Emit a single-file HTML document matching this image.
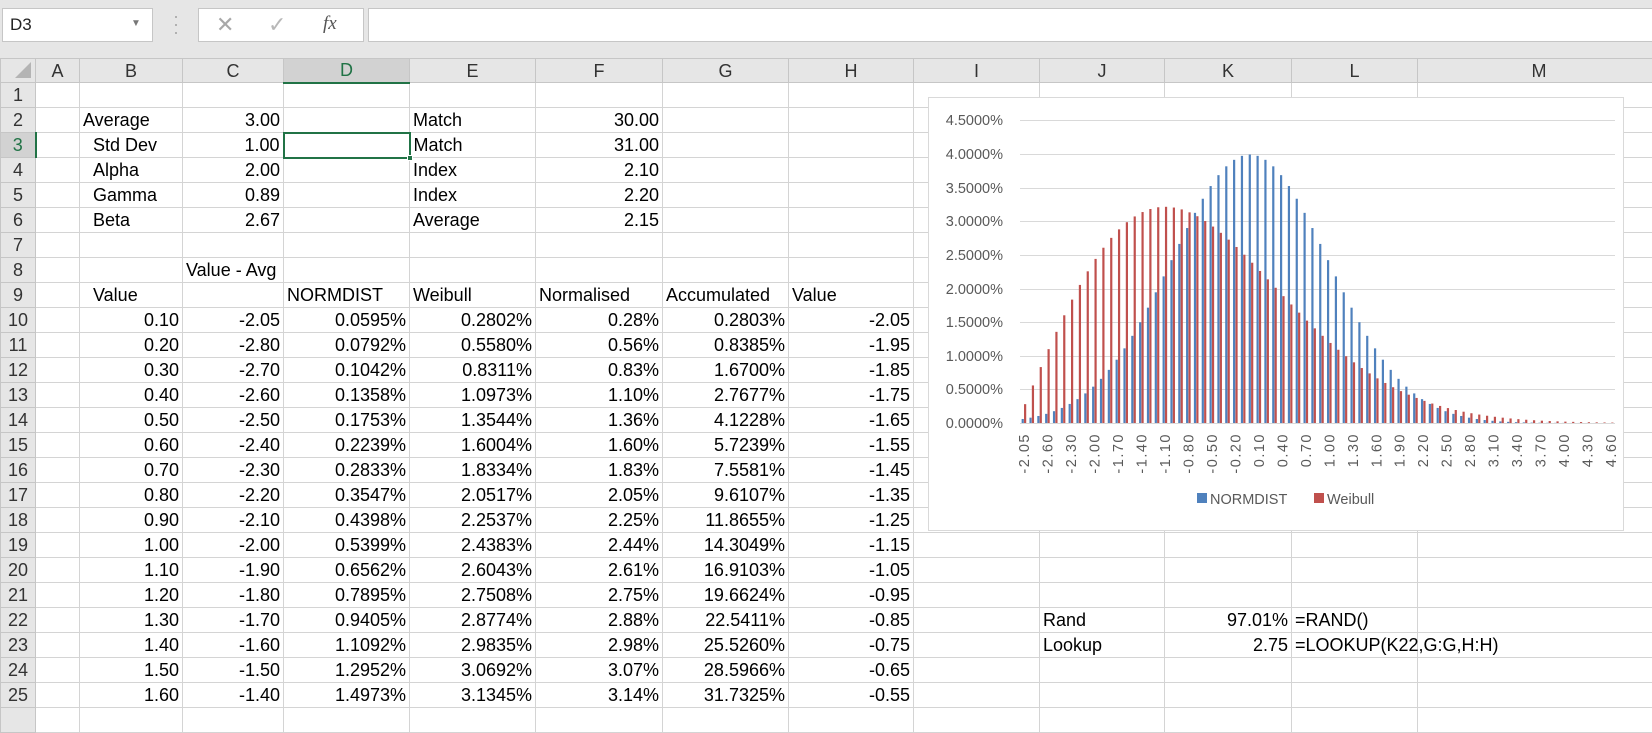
<!DOCTYPE html>
<html><head><meta charset="utf-8">
<style>
*{margin:0;padding:0;box-sizing:border-box}
body{width:1652px;height:712px;overflow:hidden;background:#fff;font-family:"Liberation Sans",Arial,sans-serif;position:relative}
#top{position:absolute;left:0;top:0;width:1652px;height:58px;background:#e6e6e6}
.box{position:absolute;background:#fff;border:1px solid #c6c6c6}
table{position:absolute;left:0;top:58px;border-collapse:collapse;table-layout:fixed;width:1660px}
td{border:1px solid #d4d4d4;height:25px;font-size:18px;white-space:nowrap;overflow:visible;padding:0 3px;line-height:22px;color:#000}
tr.h td{height:24px;background:#e6e6e6;border-color:#c6c6c6;text-align:center;color:#333;font-size:18px}
td.rh{background:#e6e6e6;border-color:#c6c6c6;text-align:center;color:#333;padding:0}
.r{text-align:right}
.i{padding-left:13px}
</style></head><body>
<div id="top">
 <div class="box" style="left:2px;top:8px;width:151px;height:34px"><span style="position:absolute;left:7px;top:6px;font-size:17px;color:#222">D3</span><span style="position:absolute;left:128px;top:9px;font-size:10px;color:#777">▼</span></div>
 <div style="position:absolute;left:173px;top:12px;color:#a8a8a8;font-size:18px;line-height:8px">·<br>·<br>·</div>
 <div class="box" style="left:198px;top:8px;width:166px;height:34px">
  <span style="position:absolute;left:17px;top:3px;font-size:22px;color:#a8a8a8">✕</span>
  <span style="position:absolute;left:69px;top:3px;font-size:22px;color:#b8b8b8">✓</span>
  <span style="position:absolute;left:124px;top:4px;font-size:19px;color:#555;font-family:'Liberation Serif',serif;font-style:italic">fx</span>
 </div>
 <div class="box" style="left:368px;top:8px;width:1290px;height:34px"></div>
</div>
<table>
<colgroup><col style="width:35px"><col style="width:44px"><col style="width:103px"><col style="width:101px"><col style="width:126px"><col style="width:126px"><col style="width:127px"><col style="width:126px"><col style="width:125px"><col style="width:126px"><col style="width:125px"><col style="width:127px"><col style="width:126px"><col style="width:243px"></colgroup>
<tr class="h"><td style="position:relative"><svg width="20" height="20" style="position:absolute;right:2px;bottom:2px"><path d="M18 2 L18 18 L2 18 Z" fill="#b4b4b4"/></svg></td><td>A</td><td>B</td><td>C</td><td style="background:#d2d2d2;border-bottom:2px solid #217346;color:#217346">D</td><td>E</td><td>F</td><td>G</td><td>H</td><td>I</td><td>J</td><td>K</td><td>L</td><td>M</td></tr>
<tr><td class="rh">1</td><td></td><td></td><td></td><td></td><td></td><td></td><td></td><td></td><td></td><td></td><td></td><td></td><td></td></tr>
<tr><td class="rh">2</td><td></td><td>Average</td><td class="r">3.00</td><td></td><td>Match</td><td class="r">30.00</td><td></td><td></td><td></td><td></td><td></td><td></td><td></td></tr>
<tr><td class="rh" style="background:#d2d2d2;color:#217346;border-right:2px solid #217346">3</td><td></td><td class="i">Std Dev</td><td class="r">1.00</td><td style="border:2px solid #217346;position:relative"><div style="position:absolute;right:-4px;bottom:-4px;width:6px;height:6px;background:#217346;border:1px solid #fff"></div></td><td>Match</td><td class="r">31.00</td><td></td><td></td><td></td><td></td><td></td><td></td><td></td></tr>
<tr><td class="rh">4</td><td></td><td class="i">Alpha</td><td class="r">2.00</td><td></td><td>Index</td><td class="r">2.10</td><td></td><td></td><td></td><td></td><td></td><td></td><td></td></tr>
<tr><td class="rh">5</td><td></td><td class="i">Gamma</td><td class="r">0.89</td><td></td><td>Index</td><td class="r">2.20</td><td></td><td></td><td></td><td></td><td></td><td></td><td></td></tr>
<tr><td class="rh">6</td><td></td><td class="i">Beta</td><td class="r">2.67</td><td></td><td>Average</td><td class="r">2.15</td><td></td><td></td><td></td><td></td><td></td><td></td><td></td></tr>
<tr><td class="rh">7</td><td></td><td></td><td></td><td></td><td></td><td></td><td></td><td></td><td></td><td></td><td></td><td></td><td></td></tr>
<tr><td class="rh">8</td><td></td><td></td><td>Value - Avg</td><td></td><td></td><td></td><td></td><td></td><td></td><td></td><td></td><td></td><td></td></tr>
<tr><td class="rh">9</td><td></td><td class="i">Value</td><td></td><td>NORMDIST</td><td>Weibull</td><td>Normalised</td><td>Accumulated</td><td>Value</td><td></td><td></td><td></td><td></td><td></td></tr>
<tr><td class="rh">10</td><td></td><td class="r">0.10</td><td class="r">-2.05</td><td class="r">0.0595%</td><td class="r">0.2802%</td><td class="r">0.28%</td><td class="r">0.2803%</td><td class="r">-2.05</td><td></td><td></td><td></td><td></td><td></td></tr>
<tr><td class="rh">11</td><td></td><td class="r">0.20</td><td class="r">-2.80</td><td class="r">0.0792%</td><td class="r">0.5580%</td><td class="r">0.56%</td><td class="r">0.8385%</td><td class="r">-1.95</td><td></td><td></td><td></td><td></td><td></td></tr>
<tr><td class="rh">12</td><td></td><td class="r">0.30</td><td class="r">-2.70</td><td class="r">0.1042%</td><td class="r">0.8311%</td><td class="r">0.83%</td><td class="r">1.6700%</td><td class="r">-1.85</td><td></td><td></td><td></td><td></td><td></td></tr>
<tr><td class="rh">13</td><td></td><td class="r">0.40</td><td class="r">-2.60</td><td class="r">0.1358%</td><td class="r">1.0973%</td><td class="r">1.10%</td><td class="r">2.7677%</td><td class="r">-1.75</td><td></td><td></td><td></td><td></td><td></td></tr>
<tr><td class="rh">14</td><td></td><td class="r">0.50</td><td class="r">-2.50</td><td class="r">0.1753%</td><td class="r">1.3544%</td><td class="r">1.36%</td><td class="r">4.1228%</td><td class="r">-1.65</td><td></td><td></td><td></td><td></td><td></td></tr>
<tr><td class="rh">15</td><td></td><td class="r">0.60</td><td class="r">-2.40</td><td class="r">0.2239%</td><td class="r">1.6004%</td><td class="r">1.60%</td><td class="r">5.7239%</td><td class="r">-1.55</td><td></td><td></td><td></td><td></td><td></td></tr>
<tr><td class="rh">16</td><td></td><td class="r">0.70</td><td class="r">-2.30</td><td class="r">0.2833%</td><td class="r">1.8334%</td><td class="r">1.83%</td><td class="r">7.5581%</td><td class="r">-1.45</td><td></td><td></td><td></td><td></td><td></td></tr>
<tr><td class="rh">17</td><td></td><td class="r">0.80</td><td class="r">-2.20</td><td class="r">0.3547%</td><td class="r">2.0517%</td><td class="r">2.05%</td><td class="r">9.6107%</td><td class="r">-1.35</td><td></td><td></td><td></td><td></td><td></td></tr>
<tr><td class="rh">18</td><td></td><td class="r">0.90</td><td class="r">-2.10</td><td class="r">0.4398%</td><td class="r">2.2537%</td><td class="r">2.25%</td><td class="r">11.8655%</td><td class="r">-1.25</td><td></td><td></td><td></td><td></td><td></td></tr>
<tr><td class="rh">19</td><td></td><td class="r">1.00</td><td class="r">-2.00</td><td class="r">0.5399%</td><td class="r">2.4383%</td><td class="r">2.44%</td><td class="r">14.3049%</td><td class="r">-1.15</td><td></td><td></td><td></td><td></td><td></td></tr>
<tr><td class="rh">20</td><td></td><td class="r">1.10</td><td class="r">-1.90</td><td class="r">0.6562%</td><td class="r">2.6043%</td><td class="r">2.61%</td><td class="r">16.9103%</td><td class="r">-1.05</td><td></td><td></td><td></td><td></td><td></td></tr>
<tr><td class="rh">21</td><td></td><td class="r">1.20</td><td class="r">-1.80</td><td class="r">0.7895%</td><td class="r">2.7508%</td><td class="r">2.75%</td><td class="r">19.6624%</td><td class="r">-0.95</td><td></td><td></td><td></td><td></td><td></td></tr>
<tr><td class="rh">22</td><td></td><td class="r">1.30</td><td class="r">-1.70</td><td class="r">0.9405%</td><td class="r">2.8774%</td><td class="r">2.88%</td><td class="r">22.5411%</td><td class="r">-0.85</td><td></td><td>Rand</td><td class="r">97.01%</td><td>=RAND()</td><td></td></tr>
<tr><td class="rh">23</td><td></td><td class="r">1.40</td><td class="r">-1.60</td><td class="r">1.1092%</td><td class="r">2.9835%</td><td class="r">2.98%</td><td class="r">25.5260%</td><td class="r">-0.75</td><td></td><td>Lookup</td><td class="r">2.75</td><td>=LOOKUP(K22,G:G,H:H)</td><td></td></tr>
<tr><td class="rh">24</td><td></td><td class="r">1.50</td><td class="r">-1.50</td><td class="r">1.2952%</td><td class="r">3.0692%</td><td class="r">3.07%</td><td class="r">28.5966%</td><td class="r">-0.65</td><td></td><td></td><td></td><td></td><td></td></tr>
<tr><td class="rh">25</td><td></td><td class="r">1.60</td><td class="r">-1.40</td><td class="r">1.4973%</td><td class="r">3.1345%</td><td class="r">3.14%</td><td class="r">31.7325%</td><td class="r">-0.55</td><td></td><td></td><td></td><td></td><td></td></tr>
<tr><td class="rh"></td><td></td><td></td><td></td><td></td><td></td><td></td><td></td><td></td><td></td><td></td><td></td><td></td><td></td></tr>
</table>
<svg id="ch" style="position:absolute;left:928px;top:97px;background:#fff" width="696" height="434" font-family="Liberation Sans, Arial, sans-serif" font-size="14.5" fill="#595959">
<rect x="0.5" y="0.5" width="695" height="433" fill="#fff" stroke="#d9d9d9"/>
<g stroke="#d9d9d9" stroke-width="1">
<line x1="92" x2="687" y1="23.5" y2="23.5"/><line x1="92" x2="687" y1="57.5" y2="57.5"/><line x1="92" x2="687" y1="91.5" y2="91.5"/><line x1="92" x2="687" y1="124.5" y2="124.5"/><line x1="92" x2="687" y1="158.5" y2="158.5"/><line x1="92" x2="687" y1="192.5" y2="192.5"/><line x1="92" x2="687" y1="225.5" y2="225.5"/><line x1="92" x2="687" y1="259.5" y2="259.5"/><line x1="92" x2="687" y1="292.5" y2="292.5"/><line x1="92" x2="687" y1="326.5" y2="326.5"/>
</g>
<g text-anchor="end">
<text x="75" y="28">4.5000%</text><text x="75" y="62">4.0000%</text><text x="75" y="96">3.5000%</text><text x="75" y="129">3.0000%</text><text x="75" y="163">2.5000%</text><text x="75" y="197">2.0000%</text><text x="75" y="230">1.5000%</text><text x="75" y="264">1.0000%</text><text x="75" y="297">0.5000%</text><text x="75" y="331">0.0000%</text>
</g>
<g id="bars"></g>
<g text-anchor="end" letter-spacing="1.5">
<text transform="translate(100.9,336) rotate(-90)">-2.05</text>
<text transform="translate(124.4,336) rotate(-90)">-2.60</text>
<text transform="translate(147.9,336) rotate(-90)">-2.30</text>
<text transform="translate(171.4,336) rotate(-90)">-2.00</text>
<text transform="translate(194.9,336) rotate(-90)">-1.70</text>
<text transform="translate(218.4,336) rotate(-90)">-1.40</text>
<text transform="translate(241.8,336) rotate(-90)">-1.10</text>
<text transform="translate(265.3,336) rotate(-90)">-0.80</text>
<text transform="translate(288.8,336) rotate(-90)">-0.50</text>
<text transform="translate(312.3,336) rotate(-90)">-0.20</text>
<text transform="translate(335.8,336) rotate(-90)">0.10</text>
<text transform="translate(359.3,336) rotate(-90)">0.40</text>
<text transform="translate(382.8,336) rotate(-90)">0.70</text>
<text transform="translate(406.3,336) rotate(-90)">1.00</text>
<text transform="translate(429.8,336) rotate(-90)">1.30</text>
<text transform="translate(453.3,336) rotate(-90)">1.60</text>
<text transform="translate(476.7,336) rotate(-90)">1.90</text>
<text transform="translate(500.2,336) rotate(-90)">2.20</text>
<text transform="translate(523.7,336) rotate(-90)">2.50</text>
<text transform="translate(547.2,336) rotate(-90)">2.80</text>
<text transform="translate(570.7,336) rotate(-90)">3.10</text>
<text transform="translate(594.2,336) rotate(-90)">3.40</text>
<text transform="translate(617.7,336) rotate(-90)">3.70</text>
<text transform="translate(641.2,336) rotate(-90)">4.00</text>
<text transform="translate(664.7,336) rotate(-90)">4.30</text>
<text transform="translate(688.2,336) rotate(-90)">4.60</text>
</g>
<rect x="269" y="396" width="10" height="10" fill="#4f81bd"/><text x="282" y="407">NORMDIST</text>
<rect x="386" y="396" width="10" height="10" fill="#c0504d"/><text x="399" y="407">Weibull</text>
</svg>
<script>
(function(){
var g=document.getElementById('bars'),s='',y0=326,k=67.3,w=7.83;
for(var i=0;i<76;i++){
 var v=0.1*(i+1),x=v-3;
 var n=10*Math.exp(-x*x/2)/Math.sqrt(2*Math.PI);
 var b=2.67,wb=10*(2/b)*(v/b)*Math.exp(-Math.pow(v/b,2));
 var cx=92+(i+0.5)*w;
 var hn=n*k,hw=wb*k;
 s+='<rect x="'+(cx-2.3).toFixed(2)+'" y="'+(y0-hn).toFixed(2)+'" width="2.2" height="'+hn.toFixed(2)+'" fill="#4f81bd"/>';
 s+='<rect x="'+(cx+0.1).toFixed(2)+'" y="'+(y0-hw).toFixed(2)+'" width="2.2" height="'+hw.toFixed(2)+'" fill="#c0504d"/>';
}
g.innerHTML=s;
})();
</script>
</body></html>
